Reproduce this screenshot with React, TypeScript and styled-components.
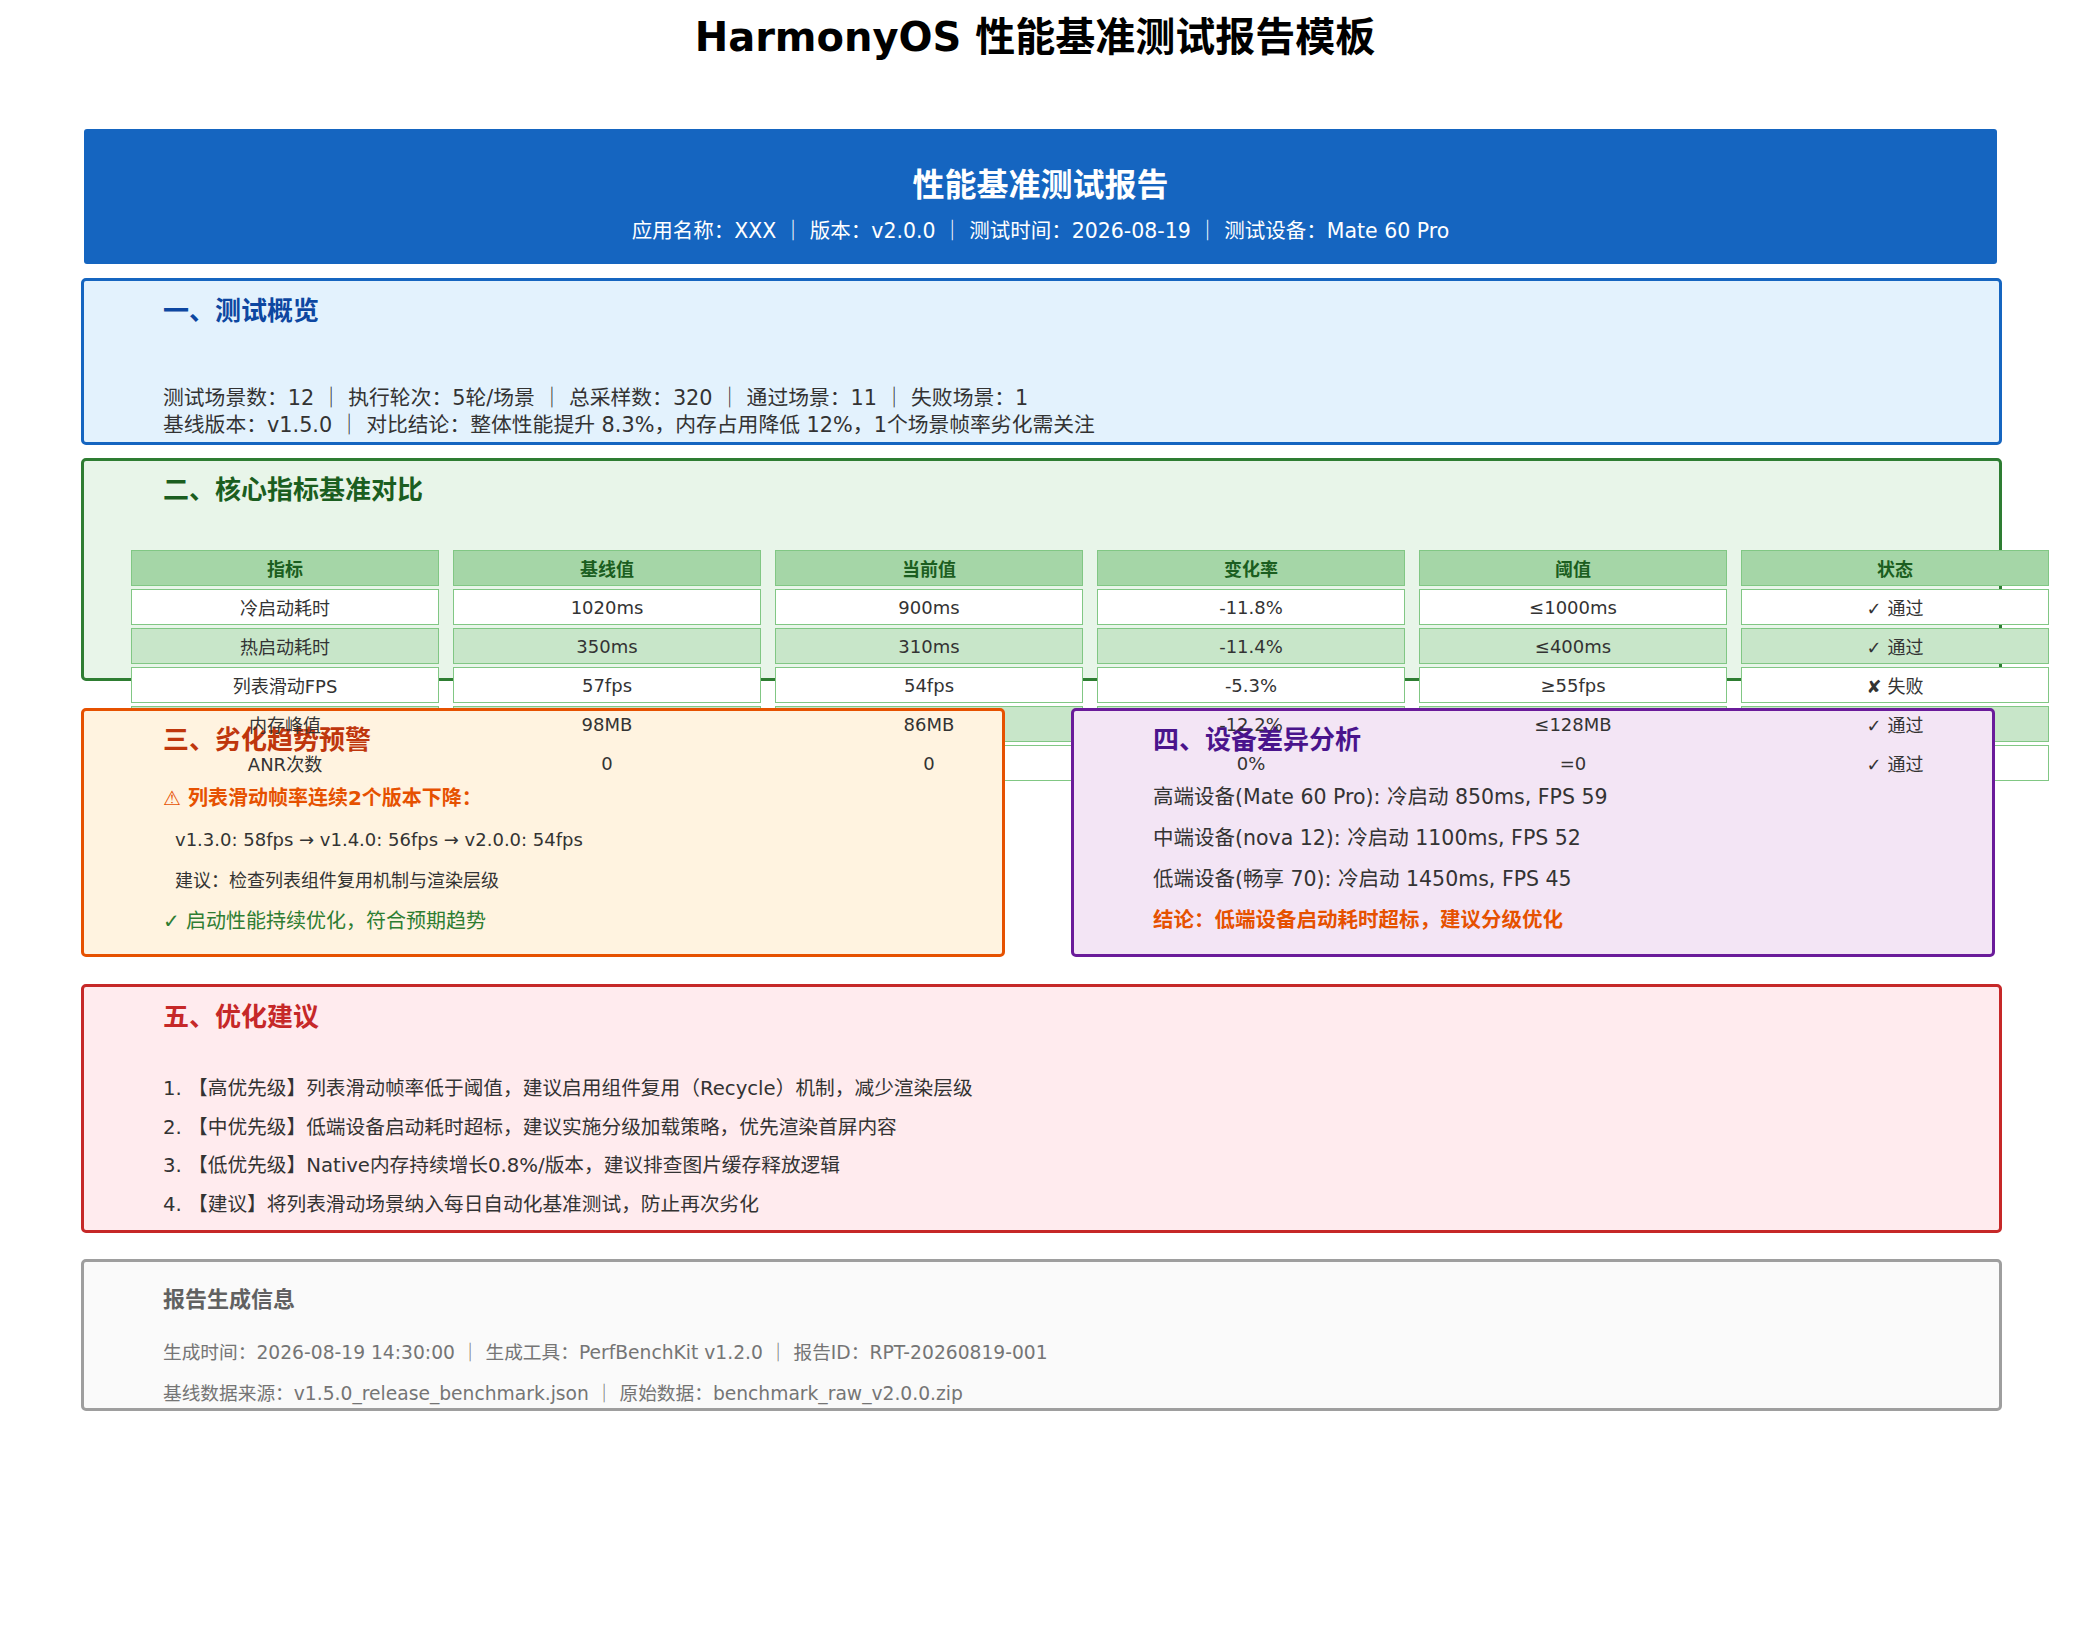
import React from "react";
import styled, { createGlobalStyle } from "styled-components";

const Global = createGlobalStyle`
  * { box-sizing: border-box; }
  body { margin: 0; background: #fff; font-family: "DejaVu Sans", "Noto Sans CJK SC", sans-serif; color: #333; }
`;

const Page = styled.div`
  width: 2080px;
  height: 1630px;
  overflow: hidden;
  position: relative;
`;

const Title = styled.h1`
  margin: 0;
  width: 2070px;
  height: 74px;
  line-height: 74px;
  text-align: center;
  font-size: 40px;
  font-weight: bold;
  color: #000;
`;

const Header = styled.div`
  margin: 55px 0 0 84px;
  width: 1913px;
  height: 135px;
  background: #1565c0;
  border-radius: 3px;
  padding-top: 36px;
  text-align: center;
  color: #fff;
`;

const HeaderTitle = styled.div`
  font-size: 32px;
  font-weight: bold;
  line-height: 40px;
`;

const HeaderSub = styled.div`
  margin-top: 12px;
  font-size: 20.5px;
  line-height: 28px;
`;

const Card = styled.div<{ $border: string; $bg: string; $mt: number; $h: number; $w?: number; $z?: boolean }>`
  margin-top: ${(p) => p.$mt}px;
  margin-left: 81px;
  width: ${(p) => p.$w ?? 1921}px;
  height: ${(p) => p.$h}px;
  border: 3px solid ${(p) => p.$border};
  background: ${(p) => p.$bg};
  border-radius: 5px;
  padding-left: 79px;
  ${(p) => (p.$z ? "position: relative; z-index: 1;" : "")}
`;

const Heading = styled.div<{ $color: string; $pt?: number; $size?: number }>`
  padding-top: ${(p) => p.$pt ?? 13}px;
  line-height: 34px;
  font-size: ${(p) => p.$size ?? 26}px;
  font-weight: bold;
  color: ${(p) => p.$color};
`;

const Lines = styled.div<{ $mt: number; $lh: number; $size: number; $color?: string }>`
  margin-top: ${(p) => p.$mt}px;
  line-height: ${(p) => p.$lh}px;
  font-size: ${(p) => p.$size}px;
  color: ${(p) => p.$color ?? "#333"};
  white-space: pre;
`;

const Line = styled.div<{ $color?: string; $bold?: boolean; $indent?: number; $size?: number }>`
  color: ${(p) => p.$color ?? "inherit"};
  font-weight: ${(p) => (p.$bold ? "bold" : "normal")};
  padding-left: ${(p) => p.$indent ?? 0}px;
  ${(p) => (p.$size ? `font-size: ${p.$size}px;` : "")}
`;

const TableGrid = styled.div`
  margin-top: 43px;
  margin-left: -32px;
  width: 1920px;
  display: grid;
  grid-template-columns: repeat(6, 308px);
  column-gap: 14px;
  row-gap: 3px;
`;

const Cell = styled.div<{ $head?: boolean; $alt?: boolean }>`
  height: 36px;
  border: 1.5px solid #81c784;
  background: ${(p) => (p.$head ? "#a5d6a7" : p.$alt ? "#c8e6c9" : "#fff")};
  display: flex;
  align-items: center;
  justify-content: center;
  font-size: 18px;
  font-weight: ${(p) => (p.$head ? "bold" : "normal")};
  color: ${(p) => (p.$head ? "#1b5e20" : "#333")};
`;

const CellText = styled.span`
  position: relative;
  z-index: 2;
`;

const Row = styled.div`
  display: flex;
  gap: 66px;
  margin-top: 27px;
  margin-left: 81px;
`;

const HalfCard = styled(Card)`
  margin-left: 0;
`;

const headers = ["指标", "基线值", "当前值", "变化率", "阈值", "状态"];
const rows = [
  ["冷启动耗时", "1020ms", "900ms", "-11.8%", "≤1000ms", "✓ 通过"],
  ["热启动耗时", "350ms", "310ms", "-11.4%", "≤400ms", "✓ 通过"],
  ["列表滑动FPS", "57fps", "54fps", "-5.3%", "≥55fps", "✘ 失败"],
  ["内存峰值", "98MB", "86MB", "-12.2%", "≤128MB", "✓ 通过"],
  ["ANR次数", "0", "0", "0%", "=0", "✓ 通过"],
];

export default function App() {
  return (
    <Page>
      <Global />
      <Title>HarmonyOS 性能基准测试报告模板</Title>
      <Header>
        <HeaderTitle>性能基准测试报告</HeaderTitle>
        <HeaderSub>应用名称：XXX ｜ 版本：v2.0.0 ｜ 测试时间：2026-08-19 ｜ 测试设备：Mate 60 Pro</HeaderSub>
      </Header>

      <Card $border="#1565c0" $bg="#e3f2fd" $mt={14} $h={167}>
        <Heading $color="#0d47a1">一、测试概览</Heading>
        <Lines $mt={57} $lh={27} $size={20.8}>
          <Line>测试场景数：12 ｜ 执行轮次：5轮/场景 ｜ 总采样数：320 ｜ 通过场景：11 ｜ 失败场景：1</Line>
          <Line>基线版本：v1.5.0 ｜ 对比结论：整体性能提升 8.3%，内存占用降低 12%，1个场景帧率劣化需关注</Line>
        </Lines>
      </Card>

      <Card $border="#2e7d32" $bg="#e8f5e9" $mt={13} $h={223}>
        <Heading $color="#1b5e20" $pt={12}>二、核心指标基准对比</Heading>
        <TableGrid>
          {headers.map((h) => (
            <Cell key={h} $head>
              <CellText>{h}</CellText>
            </Cell>
          ))}
          {rows.map((r, i) =>
            r.map((c, j) => (
              <Cell key={`${i}-${j}`} $alt={i % 2 === 1}>
                <CellText>{c}</CellText>
              </Cell>
            ))
          )}
        </TableGrid>
      </Card>

      <Row>
        <HalfCard $border="#e65100" $bg="#fff3e0" $mt={0} $h={249} $w={924} $z>
          <Heading $color="#bf360c" $pt={12}>三、劣化趋势预警</Heading>
          <Lines $mt={21} $lh={41} $size={20}>
            <Line $color="#e65100" $bold>⚠ 列表滑动帧率连续2个版本下降：</Line>
            <Line $indent={12} $size={18}>v1.3.0: 58fps → v1.4.0: 56fps → v2.0.0: 54fps</Line>
            <Line $indent={12} $size={18}>建议：检查列表组件复用机制与渲染层级</Line>
            <Line $color="#2e7d32">✓ 启动性能持续优化，符合预期趋势</Line>
          </Lines>
        </HalfCard>
        <HalfCard $border="#6a1b9a" $bg="#f3e5f5" $mt={0} $h={249} $w={924} $z>
          <Heading $color="#4a148c" $pt={12}>四、设备差异分析</Heading>
          <Lines $mt={20} $lh={41} $size={20.5}>
            <Line>高端设备(Mate 60 Pro): 冷启动 850ms, FPS 59</Line>
            <Line>中端设备(nova 12): 冷启动 1100ms, FPS 52</Line>
            <Line>低端设备(畅享 70): 冷启动 1450ms, FPS 45</Line>
            <Line $color="#e65100" $bold>结论：低端设备启动耗时超标，建议分级优化</Line>
          </Lines>
        </HalfCard>
      </Row>

      <Card $border="#c62828" $bg="#ffebee" $mt={27} $h={249}>
        <Heading $color="#c62828" $pt={13}>五、优化建议</Heading>
        <Lines $mt={36} $lh={38.5} $size={19.7}>
          <Line>1. 【高优先级】列表滑动帧率低于阈值，建议启用组件复用（Recycle）机制，减少渲染层级</Line>
          <Line>2. 【中优先级】低端设备启动耗时超标，建议实施分级加载策略，优先渲染首屏内容</Line>
          <Line>3. 【低优先级】Native内存持续增长0.8%/版本，建议排查图片缓存释放逻辑</Line>
          <Line>4. 【建议】将列表滑动场景纳入每日自动化基准测试，防止再次劣化</Line>
        </Lines>
      </Card>

      <Card $border="#9e9e9e" $bg="#fafafa" $mt={26} $h={152}>
        <Heading $color="#616161" $pt={21} $size={22}>报告生成信息</Heading>
        <Lines $mt={15} $lh={41} $size={18.7} $color="#757575">
          <Line>生成时间：2026-08-19 14:30:00 ｜ 生成工具：PerfBenchKit v1.2.0 ｜ 报告ID：RPT-20260819-001</Line>
          <Line>基线数据来源：v1.5.0_release_benchmark.json ｜ 原始数据：benchmark_raw_v2.0.0.zip</Line>
        </Lines>
      </Card>
    </Page>
  );
}
